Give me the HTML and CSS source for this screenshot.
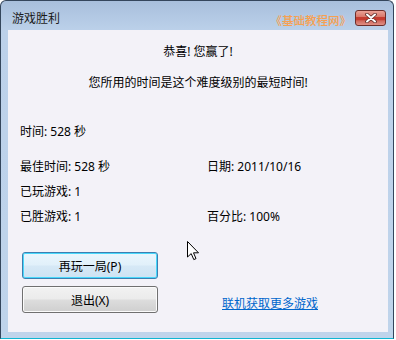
FILE: index.html
```html
<!DOCTYPE html>
<html lang="zh-CN">
<head>
    <meta charset="UTF-8">
    <title>游戏胜利</title>
    <link rel="stylesheet" href="styles.css">
</head>
<body>
    <div class="window">
        <div class="titlebar">
            <span class="title">游戏胜利</span>
            <span class="watermark">《基础教程网》</span>
            <button class="close-btn" title="关闭">
                <svg width="14" height="10" viewBox="0 0 14 10">
                    <path d="M3 1.5 L11 8.5 M11 1.5 L3 8.5" stroke="#5a2a26" stroke-width="3.6" stroke-linecap="round"/>
                    <path d="M3 1.5 L11 8.5 M11 1.5 L3 8.5" stroke="#ffffff" stroke-width="2" stroke-linecap="round"/>
                </svg>
            </button>
        </div>

        <div class="client">
            <div class="msg first">恭喜! 您赢了!</div>
            <div class="msg second">您所用的时间是这个难度级别的最短时间!</div>

            <div class="time">时间: 528 秒</div>

            <div class="stats">
                <div>最佳时间: 528 秒</div>
                <div>日期: 2011/10/16</div>
                <div>已玩游戏: 1</div>
                <div></div>
                <div>已胜游戏: 1</div>
                <div>百分比: 100%</div>
            </div>

            <div class="actions">
                <div class="btn-column">
                    <button class="btn focused">再玩一局(P)</button>
                    <button class="btn">退出(X)</button>
                </div>
                <a class="more-link" href="#">联机获取更多游戏</a>
            </div>
        </div>

        <svg class="cursor" width="13" height="20" viewBox="0 0 13 20">
            <path d="M0.5 0.5 L0.5 16 L4.2 12.6 L6.8 18.6 L9 17.6 L6.5 11.8 L11.5 11.8 Z" fill="#ffffff" stroke="#000000" stroke-width="1" stroke-linejoin="miter"/>
        </svg>
    </div>
</body>
</html>
```

FILE: styles.css
```css
body {
    margin: 0;
    background-color: #ffffff;
    font-family: "Noto Sans", "Noto Sans CJK SC", sans-serif;
    font-size: 12px;
    color: #000000;
}

.window {
    position: relative;
    width: 394px;
    height: 339px;
    box-sizing: border-box;
    border: 1px solid #34465c;
    border-bottom-color: #10b6d2;
    border-radius: 6px 6px 0 0;
    background: linear-gradient(#a8bfdc, #bcd1ea 30px, #bfd4eb);
    padding: 0 5px 6px 7px;
    display: flex;
    flex-direction: column;
}

.titlebar {
    height: 29px;
    display: flex;
    align-items: center;
    padding-left: 4px;
}

.title {
    color: #1b1b1b;
    line-height: 16px;
    margin-top: 6px;
}

.watermark {
    margin-left: auto;
    margin-right: 4px;
    margin-top: 8px;
    color: #f7a050;
    font-family: "Noto Sans CJK SC", sans-serif;
    font-size: 11.5px;
    font-weight: 500;
}

.close-btn {
    align-self: flex-end;
    margin: 0 2px 4px 0;
    width: 31px;
    height: 16px;
    padding: 0;
    border: 1px solid #6e2e2a;
    border-radius: 3px;
    background: linear-gradient(#e9a196, #d9796c 40%, #c43c30 45%, #c43c30 62%, #d0685c 70%, #e08f84);
    display: flex;
    align-items: center;
    justify-content: center;
}

.client {
    flex: 1;
    background-color: #f3f2f8;
    padding: 0 12px;
    line-height: 16px;
}

.msg {
    text-align: center;
}

.msg.first {
    margin-top: 14px;
}

.msg.second {
    margin-top: 15px;
}

.time {
    margin-top: 33px;
}

.stats {
    display: grid;
    grid-template-columns: 187px 1fr;
    grid-auto-rows: 16px;
    row-gap: 9px;
    margin-top: 19px;
}

.actions {
    display: flex;
    margin-top: 27px;
    margin-left: 2px;
}

.btn-column {
    display: flex;
    flex-direction: column;
    gap: 7px;
    width: 136px;
}

.btn {
    height: 27px;
    padding: 0;
    font-family: inherit;
    font-size: 12px;
    color: #000000;
    border: 1px solid #707070;
    border-radius: 3px;
    background: linear-gradient(#f2f2f2, #ebebeb 48%, #dddddd 52%, #cfcfcf);
    box-shadow: inset 0 0 0 1px #fbfbfb;
}

.btn.focused {
    border-color: #3c7fb1;
    background: linear-gradient(#eaf6fd, #e1f0fa 48%, #d6e9f6 52%, #cde3f3);
    box-shadow: inset 0 0 0 1px #48d8fb;
}

.more-link {
    align-self: flex-end;
    margin-left: 64px;
    margin-bottom: 1px;
    color: #0066cc;
    text-decoration: underline;
}

.cursor {
    position: absolute;
    left: 186px;
    top: 240px;
}
```
